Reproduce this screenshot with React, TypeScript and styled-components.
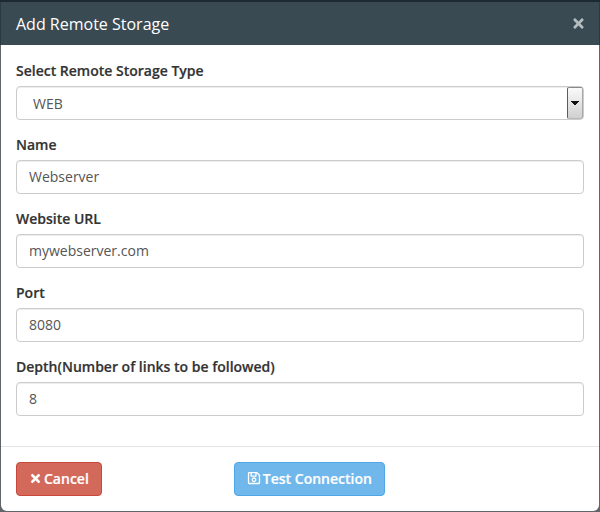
import React from 'react';
import styled, { createGlobalStyle } from 'styled-components';
import { FaTimes, FaRegSave } from 'react-icons/fa';

const GlobalStyle = createGlobalStyle`
  html, body {
    margin: 0;
    padding: 0;
    height: 512px;
    overflow: hidden;
    background: #5f6568;
  }
`;

const fields = [
  { label: 'Name', value: 'Webserver' },
  { label: 'Website URL', value: 'mywebserver.com' },
  { label: 'Port', value: '8080' },
  { label: 'Depth(Number of links to be followed)', value: '8' },
];

const App = () => (
  <>
    <GlobalStyle />
    <Backdrop>
      <Modal>
        <Header>
          <Title>Add Remote Storage</Title>
          <CloseIcon />
        </Header>
        <Body>
          <Group>
            <Label>Select Remote Storage Type</Label>
            <SelectBox>
              <SelectValue>WEB</SelectValue>
              <SelectArrow>
                <svg width='8' height='4' viewBox='0 0 8 4'>
                  <path d='M0 .5h8M1 1.5h6M2 2.5h4M3 3.5h2' stroke='#111' strokeWidth='1' />
                </svg>
              </SelectArrow>
            </SelectBox>
          </Group>
          {fields.map((field) => (
            <Group key={field.label}>
              <Label>{field.label}</Label>
              <Input readOnly value={field.value} />
            </Group>
          ))}
        </Body>
        <Footer>
          <CancelButton>
            <FaTimes size={13} />
            Cancel
          </CancelButton>
          <TestButton>
            <FaRegSave size={14} />
            Test Connection
          </TestButton>
        </Footer>
      </Modal>
    </Backdrop>
  </>
);

const Backdrop = styled.div`
  width: 600px;
  height: 512px;
  padding: 0 1px 1px 1px;
  box-sizing: border-box;
  border-top: 2px solid #1e2a32;
  background: linear-gradient(#2b3a42 43px, #5f6568 43px);
  font-family: 'Open Sans', sans-serif;
`;

const Modal = styled.div`
  height: 100%;
  display: flex;
  flex-direction: column;
  background: #fff;
  border-radius: 0 0 6px 6px;
  overflow: hidden;
`;

const Header = styled.div`
  height: 43px;
  flex: none;
  display: flex;
  align-items: center;
  justify-content: space-between;
  padding: 0 15px;
  background: #3a4a53;
`;

const Title = styled.div`
  color: #fff;
  font-size: 16px;
  line-height: 20px;
`;

const CloseIcon = styled(FaTimes)`
  color: #b4bcc1;
  width: 15px;
  height: 15px;
  margin-right: -2px;
`;

const Body = styled.div`
  flex: 1;
  padding: 16px 15px 0;
  display: flex;
  flex-direction: column;
  gap: 15px;
`;

const Group = styled.div`
  display: flex;
  flex-direction: column;
`;

const Label = styled.label`
  font-size: 14px;
  line-height: 20px;
  font-weight: 600;
  color: #333;
  margin-bottom: 5px;
  -webkit-text-stroke: 0.2px #333;
`;

const SelectBox = styled.div`
  height: 34px;
  box-sizing: border-box;
  border: 1px solid #ccc;
  border-radius: 4px;
  display: flex;
  align-items: center;
  justify-content: space-between;
  background: #fff;
  box-shadow: inset 0 1px 1px rgba(0, 0, 0, 0.075);
`;

const SelectValue = styled.span`
  font-size: 14px;
  color: #555;
  padding-left: 16px;
`;

const SelectArrow = styled.span`
  width: 16px;
  height: 32px;
  box-sizing: border-box;
  border: 1px solid #8a8a8a;
  border-left-color: #5c5c5c;
  border-right-color: #a8a8a8;
  border-bottom-color: #b8b8b8;
  border-radius: 2px;
  background: linear-gradient(#fafafa, #d0d0d0);
  display: flex;
  align-items: center;
  justify-content: center;
`;

const Input = styled.input`
  height: 34px;
  box-sizing: border-box;
  border: 1px solid #ccc;
  border-radius: 4px;
  padding: 5px 12px 7px;
  font-family: inherit;
  font-size: 14px;
  color: #555;
  outline: none;
  box-shadow: inset 0 1px 1px rgba(0, 0, 0, 0.075);
`;

const Footer = styled.div`
  flex: none;
  height: 65px;
  box-sizing: border-box;
  border-top: 1px solid #e5e5e5;
  padding: 15px 15px 0;
  display: flex;
  align-items: flex-start;
  gap: 132px;
`;

const Button = styled.button`
  height: 34px;
  box-sizing: border-box;
  border-radius: 4px;
  display: inline-flex;
  align-items: center;
  padding: 0 12px 2px;
  color: #fff;
  font-family: inherit;
  font-size: 14px;
  font-weight: 600;
  -webkit-text-stroke: 0.2px #fff;
`;

const CancelButton = styled(Button)`
  gap: 2px;
  background: #d2695a;
  border: 1px solid #c9463b;

  svg {
    stroke: currentColor;
    stroke-width: 10px;
  }
`;

const TestButton = styled(Button)`
  gap: 2px;
  background: #70b8ec;
  border: 1px solid #4fa6e6;
`;

export default App;
